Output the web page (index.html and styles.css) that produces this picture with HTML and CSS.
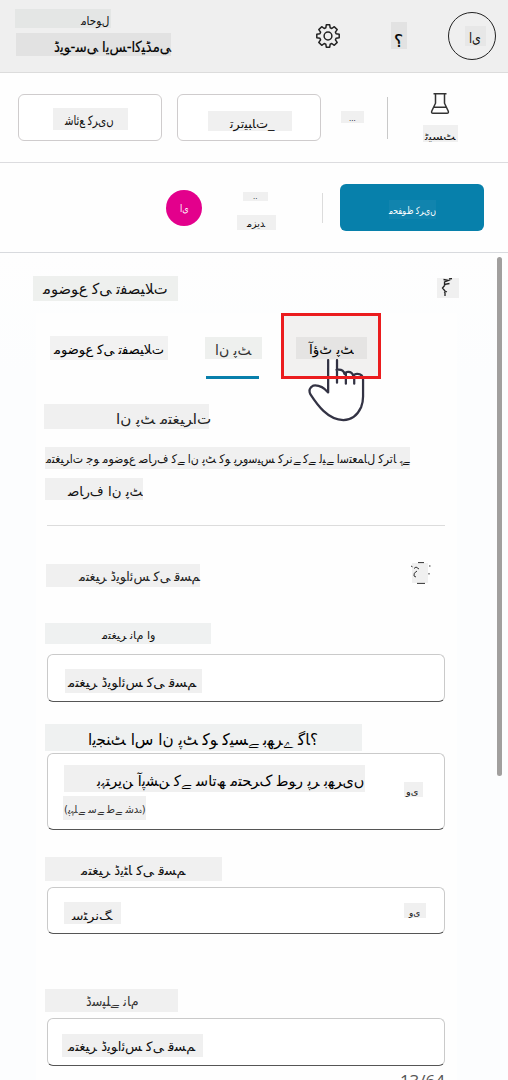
FILE: index.html
```html
<!DOCTYPE html>
<html lang="ur">
<head>
<meta charset="utf-8">
<title>موضوع کی تفصیلات</title>
<link rel="stylesheet" href="styles.css">
</head>
<body>
<header class="top">
  <div class="env">
    <div class="patch env-label"><span class="t" data-w="28">ماحول</span></div>
    <div class="patch env-name"><span class="t" data-w="117">ڈیو-سی ایس-اکیڈمی</span></div>
  </div>
  <svg class="gear" viewBox="0 0 24 24" fill="none" stroke="#222" stroke-width="1.5" stroke-linejoin="round"><path d="M10.300.8h3.400l.5 3 1.600.7 2.500-1.800 2.900 2.900-1.800 2.500.7 1.600 3.100.5v3.600l-3.100.5-.7 1.600 1.800 2.500-2.900 2.900-2.500-1.800-1.600.7-.5 3h-3.400l-.5-3-1.600-.7-2.500 1.800-2.900-2.900 1.800-2.500-.7-1.600-3.100-.5v-3.600l3.100-.5.7-1.600-1.800-2.500 2.900-2.900 2.500 1.800 1.600-.7z"/><circle cx="12" cy="12" r="3.900"/></svg>
  <div class="patch help"><span class="t">؟</span></div>
  <div class="avatar"><div class="patch avatar-patch"><span class="t" data-w="12">ای</span></div></div>
</header>
<nav class="tools">
  <div class="btn"><div class="patch publish"><span class="t" data-w="49">شائع کریں</span></div></div>
  <div class="btn second"><div class="patch arrange"><span class="t" data-w="45">ترتیبات_</span></div></div>
  <div class="patch dots"><span class="t">...</span></div>
  <div class="rule"></div>
  <div class="test">
    <svg class="flask" viewBox="0 0 20 24" fill="none" stroke="#333" stroke-width="1.5" stroke-linejoin="round"><path d="M3.500 2.700h13M5.500 2.700v9.500L1.800 20q-.8 2.300 1.200 2.300h14q2 0 1.200-2.300L14.500 12.200V2.700M4 16.200h12"/></svg>
    <div class="patch test-label"><span class="t" data-w="31">ٹیسٹ</span></div>
  </div>
</nav>
<nav class="actions">
  <div class="user"><span class="t" data-w="9">ای</span></div>
  <div class="more">
    <div class="patch more-dots"><span class="t">..</span></div>
    <div class="patch more-label"><span class="t" data-w="18">مزید</span></div>
  </div>
  <div class="rule short"></div>
  <div class="save"><div class="save-patch"><span class="t" data-w="47">محفوظ کریں</span></div></div>
</nav>
<main class="panel">
  <div class="row heading">
    <div class="patch green title"><span class="t" data-w="125">موضوع کی تفصیلات</span></div>
    <div class="patch expand"><svg viewBox="0 0 22 20" fill="none" stroke="#222" stroke-width="1.300"><path d="M6.500 1.500l5 1-4 1.500v2.500l5-1M8 7l-2.500 3 2.500 3v5M7 14.500l3-1M12 1l3-.5"/></svg></div>
  </div>
  <div class="content">
    <div class="row tabs">
      <div class="patch tab-main"><span class="t" data-w="110">موضوع کی تفصیلات</span></div>
      <div class="tab-input"><div class="patch green"><span class="t" data-w="36">ان پٹ</span></div></div>
      <div class="tab-output"><div class="patch"><span class="t" data-w="45">آؤٹ پٹ</span></div>
        <svg class="hand" viewBox="0 0 60 66" fill="none" stroke="#333344" stroke-width="2.300" stroke-linejoin="round" stroke-linecap="round"><path fill="#fff" stroke="none" d="M21 30V1h9v10q7-2 9 2 7-2 9 2 8-2 9 4v25C57 56 48 63 37 63 19 63 5 42 1 35q-2-8 8-7z"/><path d="M20.500 1v33q-7-8-15-7-6 3-3 9C9 46 20 62 36 62q12 0 18-13 2-5 2-11V21q0-6-6-6-3 0-4 2-1-4-5-4-3 0-4 2-1-5-8-4M29.500 1v23M38.500 14v11M47 17v8"/></svg>
      </div>
    </div>
    <div class="patch input-title"><span class="t" data-w="95">ان پٹ متغیرات</span></div>
    <div class="patch description"><span class="t" data-w="364">متغیرات جو موضوع صارف کے ان پٹ کو پروسیس کرنے کے لیے استعمال کرتا ہے</span></div>
    <div class="patch user-input"><span class="t" data-w="75">صارف ان پٹ</span></div>
    <hr>
    <div class="row variable">
      <div class="patch variable-title"><span class="t" data-w="121">متغیر ڈیوائس کی قسم</span></div>
      <div class="delete"><svg viewBox="0 0 20 22" fill="none" stroke="#333" stroke-width="1"><path fill="#f0f0f0" stroke="none" d="M1 1h16v20H1z"/><path d="M0 4l1.500.8M3 6.500l2-1.500 3 2M6 9q-4 2-3 5l2 1M7 .6h6M18 4h1.500M18 11v1.500M6 21.400h8"/></svg></div>
    </div>
    <div class="patch cool name-label"><span class="t" data-w="54">متغیر نام او</span></div>
    <div class="field name-field"><div class="patch"><span class="t" data-w="128">متغیر ڈیوائس کی قسم</span></div></div>
    <div class="patch cool fill-label"><span class="t" data-w="230">ایجنٹ اس ان پٹ کو کیسے بھرے گا؟</span></div>
    <div class="field fill-field">
      <div class="choice">
        <div class="patch option"><span class="t" data-w="267">بہترین آپشن کے ساتھ متحرک طور پر بھریں</span></div>
        <div class="patch default"><span class="t" data-w="82">(پہلے سے طے شدہ)</span></div>
      </div>
      <div class="patch arrow"><span class="t" data-w="12">وی</span></div>
    </div>
    <div class="patch type-label"><span class="t" data-w="104">متغیر ڈیٹا کی قسم</span></div>
    <div class="field type-field">
      <div class="patch type-value"><span class="t" data-w="39">سٹرنگ</span></div>
      <div class="patch arrow"><span class="t" data-w="11">وی</span></div>
    </div>
    <div class="patch display-label"><span class="t" data-w="53">ڈسپلے نام</span></div>
    <div class="field display-field"><div class="patch"><span class="t" data-w="127">متغیر ڈیوائس کی قسم</span></div></div>
    <div class="counter">13/64</div>
  </div>
  <div class="scrollbar"></div>
</main>
<script src="shape.js"></script>
</body>
</html>
```

FILE: styles.css
```css
* { box-sizing: border-box; }
body {
  margin: 0;
  width: 508px;
  height: 1080px;
  overflow: hidden;
  background: #fcfdfe;
  font-family: "DejaVu Sans", "Noto Sans", sans-serif;
  color: #111;
}
.t {
  display: inline-block;
  direction: ltr;
  unicode-bidi: bidi-override;
  white-space: pre;
  transform-origin: left center;
}
.patch {
  display: flex;
  align-items: center;
  background: #f0f0f0;
  font-size: 12px;
  line-height: 1;
}
.green { background: #eef0ee; }
.cool { background: #eff1f1; }
.top {
  display: flex;
  align-items: flex-start;
  height: 73px;
  padding-left: 15px;
  background: #efefef;
  border-bottom: 1px solid #dcdcdc;
}
.env { width: 301px; padding-top: 9px; }
.env-label { width: 96px; height: 19px; padding: 4px 0 0 66px; background: #e4e6e5; }
.env-name { width: 155px; height: 23px; margin: 5px 0 0 1px; padding: 5px 0 0 38px; background: #e2e2e2; font-size: 15px; color: #000; -webkit-text-stroke: .2px #000; }
.gear { width: 24px; height: 24px; margin-top: 24px; }
.help { width: 16px; height: 27px; margin: 22px 0 0 51px; padding: 11px 0 0 3px; background: #e2e2e2; font-size: 17px; color: #000; -webkit-text-stroke: .2px #000; }
.avatar { display: flex; width: 48px; height: 48px; margin: 12px 0 0 41px; padding: 13px 0 0 16px; border: 1px solid #222; border-radius: 50%; }
.avatar-patch { width: 21px; height: 20px; padding: 3px 0 0 4px; background: #e7e7e7; font-size: 14px; }
.tools { display: flex; height: 90px; padding: 21px 0 0 18px; background: #fefefe; border-bottom: 1px solid #dcdcdf; }
.btn { width: 144px; height: 47px; padding: 13px 0 0 34px; border: 1px solid #cfcccd; border-radius: 6px; background: #fff; }
.second { margin-left: 15px; padding: 16px 0 0 30px; }
.publish { width: 75px; height: 22px; padding: 2px 0 0 12px; font-size: 13px; }
.arrange { width: 84px; height: 20px; padding: 5px 0 0 22px; }
.dots { width: 23px; height: 12px; margin: 17px 0 0 20px; padding: 4px 0 0 8px; font-size: 7px; color: #000; }
.rule { width: 1px; height: 42px; margin: 3px 0 0 23px; background: #c9c9c9; }
.test { width: 37px; margin: -3px 0 0 35px; }
.flask { display: block; width: 20px; height: 24px; margin-left: 7px; }
.test-label { width: 35px; height: 17px; margin-top: 10px; padding: 6px 0 0 2px; font-size: 10px; }
.actions { display: flex; height: 90px; padding: 21px 0 0 166px; background: #fefefe; border-bottom: 1px solid #d8dade; }
.user { width: 36px; height: 36px; margin-top: 6px; padding: 12px 0 0 14px; border-radius: 50%; background: #e3008c; color: #fff; font-size: 10px; line-height: 14px; }
.more { width: 39px; margin: 8px 0 0 35px; }
.more-dots { width: 25px; height: 9px; margin-left: 6px; padding: 2px 0 0 10px; font-size: 7px; }
.more-label { width: 39px; height: 15px; margin-top: 14px; padding: 3px 0 0 10px; font-size: 10px; }
.short { height: 30px; margin: 9px 0 0 46px; background: #dcdcdc; }
.save { width: 144px; height: 47px; margin-left: 17px; padding: 16px 0 0 49px; border-radius: 6px; background: #0780ab; }
.save-patch { width: 47px; height: 19px; padding-top: 5px; background: #1184ae; color: #fff; font-size: 10px; line-height: 12px; }
.panel { position: relative; height: 827px; overflow: hidden; background: linear-gradient(#fefefe, #fcfdfe 120px); }
.row { display: flex; align-items: flex-start; }
.heading { height: 60px; padding: 23px 0 0 33px; }
.title { width: 145px; height: 25px; padding: 2px 0 0 10px; font-size: 15px; }
.expand { width: 22px; height: 20px; margin: 2px 0 0 259px; }
.expand svg { width: 22px; height: 20px; }
.content { width: 421px; padding-left: 9px; margin-left: 36px; background: #fefefe; }
.tabs { height: 91px; padding-left: 5px; }
.tab-main { width: 118px; height: 24px; margin-top: 23px; padding: 2px 0 0 4px; background: #f2f2f2; font-size: 13px; color: #000; }
.tab-input { width: 57px; height: 66px; margin: 24px 0 0 37px; }
.tab-input .patch { height: 22px; padding: 3px 0 0 10px; font-size: 14px; color: #333; }
.tab-input::after { content: ""; display: block; width: 53px; height: 3px; margin: 17px 0 0 1px; background: #087fab; }
.tab-output { position: relative; width: 100px; height: 66px; margin-left: 19px; padding: 21px 0 0 12px; border: 3px solid #eb1c1e; background: #f2f1f0; }
.tab-output .patch { width: 71px; height: 22px; padding: 3px 0 0 13px; background: #e5e4e3; color: #000; font-size: 13px; }
.hand { position: absolute; left: 24px; top: 43px; width: 59px; height: 65px; z-index: 0; clip-path: inset(0); }
.tab-output::after { content: ""; position: absolute; left: -3px; bottom: -3px; width: 100px; height: 3px; background: #eb1c1e; }
.input-title { width: 165px; height: 25px; margin-left: -1px; padding: 4px 0 0 72px; font-size: 14px; color: #222; }
.description { width: 365px; height: 22px; margin-top: 18px; padding: 2px 0 0 1px; font-size: 12px; }
.user-input { width: 98px; height: 22px; margin-top: 9px; padding: 4px 0 0 23px; font-size: 13px; }
hr { width: 398px; height: 1px; margin: 25px 0 0 2px; border: 0; background: #dcdcdc; }
.variable { height: 97px; padding: 38px 0 0 1px; }
.variable-title { width: 154px; height: 23px; padding: 2px 0 0 33px; font-size: 13px; color: #222; }
.delete { width: 20px; height: 22px; margin: -2px 0 0 211px; }
.delete svg { width: 20px; height: 22px; }
.name-label { width: 166px; height: 21px; padding: 3px 0 0 57px; font-size: 11px; }
.field { display: flex; align-items: flex-start; width: 398px; margin-left: 2px; border: 1px solid #cacaca; border-bottom-color: #555; border-radius: 6px; background: #fff; }
.name-field { height: 48px; margin-top: 10px; padding: 14px 0 0 17px; }
.name-field .patch { width: 137px; height: 24px; padding: 3px 0 0 3px; font-size: 13px; }
.fill-label { width: 317px; height: 27px; margin-top: 22px; padding: 4px 0 0 43px; font-size: 16px; color: #000; }
.fill-field { height: 77px; margin-top: 2px; padding: 11px 0 0 15px; }
.choice { width: 341px; }
.option { width: 301px; height: 27px; margin-left: 1px; padding: 5px 0 0 33px; font-size: 15px; color: #000; }
.default { width: 83px; height: 24px; margin-top: 4px; padding: 3px 0 0 1px; font-size: 11px; color: #333; }
.arrow { width: 19px; height: 15px; margin-top: 17px; padding: 5px 0 0 2px; font-size: 9px; }
.type-label { width: 177px; height: 24px; margin-top: 27px; padding: 2px 0 0 36px; font-size: 13px; }
.type-field { height: 47px; margin-top: 6px; padding: 14px 0 0 16px; }
.type-value { width: 57px; height: 22px; padding: 5px 0 0 8px; font-size: 12px; }
.type-field .arrow { width: 22px; margin: 1px 0 0 283px; padding-left: 5px; }
.display-label { width: 133px; height: 23px; margin-top: 55px; padding: 2px 0 0 41px; font-size: 13px; color: #333; }
.display-field { height: 48px; margin-top: 6px; padding: 15px 0 0 14px; }
.display-field .patch { width: 141px; height: 23px; padding: 2px 0 0 6px; font-size: 13px; }
.counter { width: 400px; height: 30px; margin-top: 4px; font: 17px/22px "Open Sans", sans-serif; color: #555; text-align: right; }
.scrollbar { position: absolute; top: 4px; left: 497px; width: 5px; height: 519px; border-radius: 3px; background: #a19f9e; }
```

FILE: shape.js
```js
// Contextual forms per letter: isolated, final, initial, medial.
const forms = {
  'ا': 'ﺍﺎ', 'آ': 'ﺁﺂ', 'ؤ': 'ﺅﺆ', 'ئ': 'ﺉﺊﺋﺌ', 'ب': 'ﺏﺐﺑﺒ', 'پ': 'ﭖﭗﭘﭙ',
  'ت': 'ﺕﺖﺗﺘ', 'ٹ': 'ﭦﭧﭨﭩ', 'ج': 'ﺝﺞﺟﺠ', 'ح': 'ﺡﺢﺣﺤ', 'د': 'ﺩﺪ', 'ڈ': 'ﮈﮉ',
  'ر': 'ﺭﺮ', 'ز': 'ﺯﺰ', 'س': 'ﺱﺲﺳﺴ', 'ش': 'ﺵﺶﺷﺸ', 'ص': 'ﺹﺺﺻﺼ', 'ض': 'ﺽﺾﺿﻀ',
  'ط': 'ﻁﻂﻃﻄ', 'ظ': 'ﻅﻆﻇﻈ', 'ع': 'ﻉﻊﻋﻌ', 'غ': 'ﻍﻎﻏﻐ', 'ف': 'ﻑﻒﻓﻔ', 'ق': 'ﻕﻖﻗﻘ',
  'ک': 'ﮎﮏﮐﮑ', 'گ': 'ﮒﮓﮔﮕ', 'ل': 'ﻝﻞﻟﻠ', 'م': 'ﻡﻢﻣﻤ', 'ن': 'ﻥﻦﻧﻨ', 'و': 'ﻭﻮ',
  'ہ': 'ﮦﮧﮨﮩ', 'ھ': 'ﮪﮫﮬﮭ', 'ی': 'ﯼﯽﯾﯿ', 'ے': 'ﮮﮯ'
};
function shape(text) {
  return [...text].map((ch, i) => {
    const f = forms[ch];
    if (!f) return ch;
    const before = forms[text[i - 1]];
    const joinedBefore = before && before.length === 4;
    const joinedAfter = f.length === 4 && forms[text[i + 1]];
    return f[(joinedBefore ? 1 : 0) + (joinedAfter ? 2 : 0)];
  }).join('').replace(/ﻠﺎ/g, 'ﻼ');
}
document.querySelectorAll('.t').forEach(el => {
  el.textContent = shape(el.textContent);
  if (el.dataset.w) el.style.transform = `scaleX(${el.dataset.w / el.offsetWidth})`;
});
```
